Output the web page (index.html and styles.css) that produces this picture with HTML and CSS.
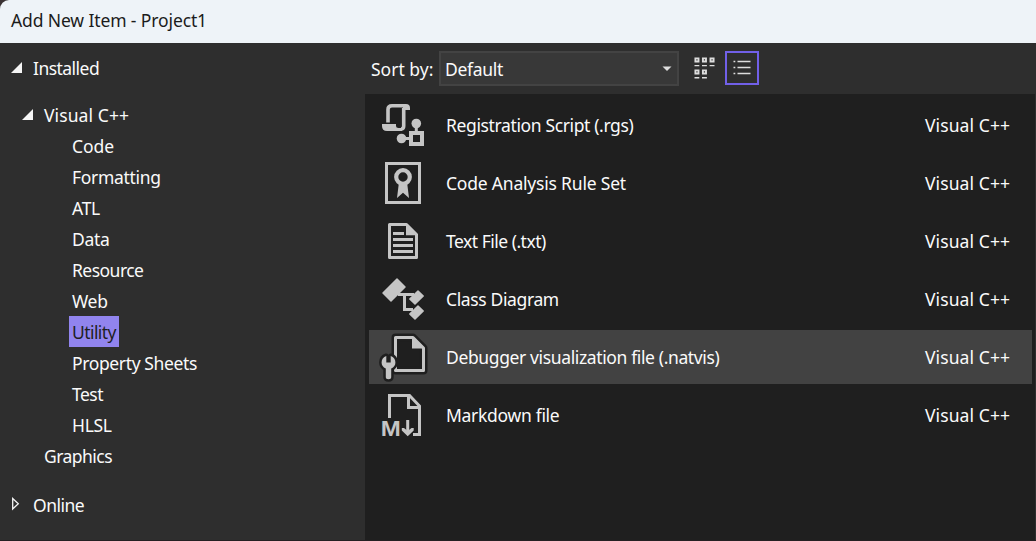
FILE: index.html
```html
<!DOCTYPE html>
<html lang="en">
<head>
<meta charset="utf-8">
<title>Add New Item - Project1</title>
<link rel="stylesheet" href="styles.css">
</head>
<body>
<div class="dialog">
  <header class="titlebar"><span class="t-title">Add New Item - Project1</span></header>
  <div class="body">
    <nav class="tree">
      <div class="node root"><svg class="arrow" width="12" height="12"><path d="M0 12H11V1Z" fill="#f5f5f5"/></svg><span class="t-installed">Installed</span></div>
      <div class="node lang"><svg class="arrow" width="12" height="12"><path d="M0 12H11V1Z" fill="#f5f5f5"/></svg><span class="t-lang">Visual C++</span></div>
      <div class="node leaf"><span class="t-code">Code</span></div>
      <div class="node leaf"><span class="t-formatting">Formatting</span></div>
      <div class="node leaf"><span class="t-atl">ATL</span></div>
      <div class="node leaf"><span class="t-data">Data</span></div>
      <div class="node leaf"><span class="t-resource">Resource</span></div>
      <div class="node leaf"><span class="t-web">Web</span></div>
      <div class="node leaf active"><span class="t-utility">Utility</span></div>
      <div class="node leaf"><span class="t-sheets">Property Sheets</span></div>
      <div class="node leaf"><span class="t-test">Test</span></div>
      <div class="node leaf"><span class="t-hlsl">HLSL</span></div>
      <div class="node group"><span class="t-graphics">Graphics</span></div>
      <div class="node root online"><svg class="arrow" width="12" height="16"><path d="M1.7 2.5V13L7.3 7.7Z" fill="none" stroke="#f5f5f5" stroke-width="1.3"/></svg><span class="t-online">Online</span></div>
    </nav>
    <main class="content">
      <div class="toolbar">
        <span class="sort-label t-sort">Sort by:</span>
        <div class="select"><span class="t-default">Default</span><svg width="10" height="6"><path d="M.5.5H9.5L5 5Z" fill="#ddd"/></svg></div>
        <svg class="grid-icon" width="22" height="24" fill="none" stroke="#ddd">
          <path stroke-width="1.9" d="M1.4 1.4h3.1v3.1H1.4zM8.9 1.4h3.1v3.1H8.9zM16.5 1.4h3.1v3.1H16.5zM1.4 13.4h3.1v3.1H1.4zM8.9 13.4h3.1v3.1H8.9z"/>
          <path stroke-width="1.4" d="M.5 8.6H5.3M8 8.6H12.9M15.6 8.6H20.5M.5 20.7H5.3M8 20.7H12.9"/>
        </svg>
        <div class="list-button"><svg width="18" height="16" stroke="#ddd" stroke-width="1.5"><path d="M.5 2.4H2.3M4.5 2.4H17.5M.5 8.4H2.3M4.5 8.4H17.5M.5 14.4H2.3M4.5 14.4H17.5"/></svg></div>
      </div>
      <div class="list">
        <div class="item">
          <svg class="icon" viewBox="-6 2 66 54">
            <path fill="none" stroke="#c5c5c5" stroke-width="3.6" d="M13 26.5V13.5Q13 9.8 17 9.8H31M28.7 12V30Q28.7 33 26 33"/>
            <path fill="#c5c5c5" d="M28 8H31Q35 8 35 12V14H28ZM7 28H21V30Q21 32 23.5 32H27V35H12Q7 35 7 30Z"/>
            <path fill="none" stroke="#c5c5c5" stroke-width="4" d="M36 37H47V48H36Z"/>
            <path stroke="#c5c5c5" stroke-width="3" d="M41.3 28V36M27 42.5H35"/>
            <circle cx="41.3" cy="27.5" r="4.8" fill="#c5c5c5"/><circle cx="26.5" cy="42.5" r="4.8" fill="#c5c5c5"/>
          </svg>
          <span class="name t-n1">Registration Script (.rgs)</span><span class="kind">Visual C++</span>
        </div>
        <div class="item">
          <svg class="icon" viewBox="-6 2 66 54">
            <path fill="none" stroke="#c5c5c5" stroke-width="3" d="M11.5 9.5H44.5V48.5H11.5Z"/>
            <path fill="#c5c5c5" d="M24 28H32L34 44L28 38.8L22 44Z"/>
            <circle cx="28" cy="23" r="6.8" fill="#1f1f1f" stroke="#c5c5c5" stroke-width="4.2"/>
          </svg>
          <span class="name t-n2">Code Analysis Rule Set</span><span class="kind">Visual C++</span>
        </div>
        <div class="item">
          <svg class="icon" viewBox="-6 2 66 54">
            <path fill="none" stroke="#c5c5c5" stroke-width="3" stroke-linejoin="round" d="M14.5 12.5H31.5L41.5 22.5V45.5H14.5Z"/>
            <path fill="#c5c5c5" d="M31 12L42.5 23.3H31Z"/>
            <path stroke="#c5c5c5" stroke-width="3" d="M18 21.5H29M18 27.5H38M18 33.5H38M18 39.5H38"/>
          </svg>
          <span class="name t-n3">Text File (.txt)</span><span class="kind">Visual C++</span>
        </div>
        <div class="item">
          <svg class="icon" viewBox="-6 2 66 54">
            <g fill="#c5c5c5" stroke="#c5c5c5" stroke-linejoin="round" stroke-width="1.5">
              <path d="M8 23L22 9L30 17L16 31Z"/><path d="M43 21L48.2 26L40 34L34.8 29Z"/><path d="M43 36L48.2 41L40 49L34.8 44Z"/>
            </g>
            <path fill="none" stroke="#c5c5c5" stroke-width="3" d="M23 24.5H39M29.5 24.5V39.5H38"/>
          </svg>
          <span class="name t-n4">Class Diagram</span><span class="kind">Visual C++</span>
        </div>
        <div class="item selected">
          <svg class="icon" viewBox="4 4 66 54">
            <path fill="#1f1f1f" stroke="#1f1f1f" stroke-width="8" stroke-linejoin="round" d="M30.5 11.5H48L58.5 22V44.5H30.5Z"/>
            <path fill="none" stroke="#c5c5c5" stroke-width="3" stroke-linejoin="round" d="M30.5 11.5H48L58.5 22V44.5H30.5Z"/>
            <path fill="#c5c5c5" d="M47 11L59.5 22.5H47Z"/>
            <path fill="#c5c5c5" stroke="#1f1f1f" stroke-width="5" stroke-linejoin="round" paint-order="stroke" d="M21.3 30Q16.6 31.5 16.6 36.5Q16.6 40.5 20.8 42.5V51Q20.8 53.2 23.5 53.2Q26.2 53.2 26.2 51V42.5Q30.4 40.5 30.4 36.5Q30.4 31.5 25.7 30V36.5H21.3Z"/>
          </svg>
          <span class="name t-n5">Debugger visualization file (.natvis)</span><span class="kind">Visual C++</span>
        </div>
        <div class="item">
          <svg class="icon" viewBox="-6 2 66 54">
            <path fill="none" stroke="#c5c5c5" stroke-width="3" d="M14.5 32V9.5H34.5L44.5 20V48.5H38M33.5 9V21.5H45"/>
            <text class="md-letter" x="5.7" y="50" textLength="20" lengthAdjust="spacingAndGlyphs">M</text>
            <path fill="none" stroke="#c5c5c5" stroke-width="3" d="M32.7 34V45"/>
            <path fill="#c5c5c5" d="M26.8 42H29L32.7 45L36.5 42H38.7V44.5L32.7 50.2L26.8 44.5Z"/>
          </svg>
          <span class="name t-n6">Markdown file</span><span class="kind">Visual C++</span>
        </div>
      </div>
    </main>
  </div>
</div>
</body>
</html>
```
FILE: styles.css
```css
* { box-sizing: border-box; }
body { margin: 0; background: #3a3234; font-family: "Noto Sans", "Open Sans", sans-serif; font-size: 17.5px; color: #fafafa; letter-spacing: -0.3px; }
.dialog { width: 1036px; height: 541px; background: #2e2e2e; border-bottom: 1px solid #242022; border-top-left-radius: 9px; overflow: hidden; display: flex; flex-direction: column; white-space: nowrap; }
.titlebar { height: 43px; flex: none; background: #eef3f8; color: #1b1b1b; padding: 0 11px; line-height: 41px; }
.body { flex: 1; display: flex; min-height: 0; }
.tree { width: 365px; flex: none; padding-top: 9px; }
.node { height: 31px; line-height: 33px; display: flex; }
.arrow { flex: none; margin-top: 9px; }
.root { padding-left: 11px; gap: 10px; margin-bottom: 16px; }
.lang { padding-left: 22px; gap: 10px; }
.leaf { padding-left: 69px; }
.leaf span { padding: 0 3px; }
.active span { background: #9184ee; color: #1f1f1f; }
.group { padding-left: 44px; }
.online { margin-top: 18px; }
.online .arrow { margin-top: 7px; }
.content { flex: 1; display: flex; flex-direction: column; }
.toolbar { height: 51px; flex: none; display: flex; padding: 8px 0 0 6px; }
.sort-label { width: 68px; line-height: 37px; }
.select { width: 240px; height: 35px; border: 2px solid #434343; background: #383838; display: flex; align-items: center; justify-content: space-between; padding: 0 5px 0 4px; line-height: 31px; }
.select span { padding-top: 2px; }
.grid-icon { margin: 6px 9px 0 15px; }
.list-button { width: 34px; height: 34px; border: 2px solid #7160e8; padding: 6px; }
.list-button svg { display: block; }
.list { flex: 1; width: 670px; background: #1f1f1f; padding: 4px 3px 0 4px; display: flex; flex-direction: column; gap: 4px; }
.item { height: 54px; display: flex; align-items: center; padding-right: 22px; }
.selected { background: #424242; }
.icon { width: 66px; height: 54px; margin-right: 11px; flex: none; }
.name { flex: 1; }
.kind { width: 85px; }
.md-letter { font: bold 22px "Liberation Sans", sans-serif; fill: #c5c5c5; letter-spacing: 0; }

/* Tracking per label */
.t-title { letter-spacing: -0.12px; }
.t-lang, .kind { letter-spacing: 0.1px; }
.t-installed, .t-resource, .t-test, .t-graphics { letter-spacing: -0.53px; }
.t-code { letter-spacing: -0.05px; }
.t-utility { letter-spacing: -0.58px; }
.t-sheets, .t-n1, .t-n4, .t-n5 { letter-spacing: -0.37px; }
.t-online, .t-n3 { letter-spacing: -0.5px; }
.t-sort { letter-spacing: 0; }
.t-n2 { letter-spacing: -0.2px; }
```
